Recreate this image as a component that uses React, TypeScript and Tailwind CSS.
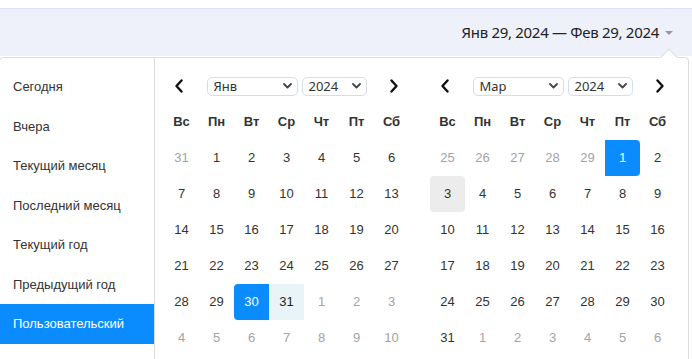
import React from 'react';

type Day = { d: number; muted?: boolean; kind?: 'start' | 'end' | 'mid' | 'hover' };

const weekDays = ['Вс', 'Пн', 'Вт', 'Ср', 'Чт', 'Пт', 'Сб'];

const presets = [
  'Сегодня',
  'Вчера',
  'Текущий месяц',
  'Последний месяц',
  'Текущий год',
  'Предыдущий год',
  'Пользовательский',
];

const range = (from: number, to: number, muted = false): Day[] =>
  Array.from({ length: to - from + 1 }, (_, i) => ({ d: from + i, muted }));

const january: Day[] = [
  { d: 31, muted: true },
  ...range(1, 29),
  { d: 30, kind: 'start' },
  { d: 31, kind: 'mid' },
  ...range(1, 10, true),
];

const march: Day[] = [
  ...range(25, 29, true),
  { d: 1, kind: 'end' },
  { d: 2 },
  { d: 3, kind: 'hover' },
  ...range(4, 31),
  ...range(1, 6, true),
];

const ChevronLeft = () => (
  <svg width="10" height="14" viewBox="0 0 10 14" fill="none">
    <path d="M7.5 1.5 2.5 7l5 5.5" stroke="#111" strokeWidth="2.4" strokeLinecap="round" strokeLinejoin="round" />
  </svg>
);

const ChevronRight = () => (
  <svg width="10" height="14" viewBox="0 0 10 14" fill="none">
    <path d="M2.5 1.5 7.5 7l-5 5.5" stroke="#111" strokeWidth="2.4" strokeLinecap="round" strokeLinejoin="round" />
  </svg>
);

const SelectChevron = () => (
  <svg width="9" height="6" viewBox="0 0 9 6" fill="none">
    <path d="M1 1l3.5 3.5L8 1" stroke="#444" strokeWidth="1.8" strokeLinecap="round" strokeLinejoin="round" />
  </svg>
);

const FakeSelect = ({ value, width }: { value: string; width: string }) => (
  <div
    className={`${width} h-[19px] flex items-center justify-between pl-[6px] pr-[5px] border border-[#d6dcea] rounded-[5px] bg-white text-[13px] text-[#333] font-['Noto_Sans',sans-serif] leading-none`}
  >
    <span>{value}</span>
    <SelectChevron />
  </div>
);

const cellClass = (day: Day) => {
  if (day.kind === 'start') return 'bg-[#0a8cff] text-white rounded-l-[4px]';
  if (day.kind === 'end') return 'bg-[#0a8cff] text-white rounded-r-[4px]';
  if (day.kind === 'mid') return 'bg-[#e8f4f8] text-[#222]';
  if (day.kind === 'hover') return 'bg-[#ececec] text-[#333] rounded-[4px]';
  return day.muted ? 'text-[#a3a3a3]' : 'text-[#333]';
};

const Month = ({ month, days }: { month: string; days: Day[] }) => (
  <div className="w-[245px]">
    <div className="h-[20px] flex items-center justify-between px-[10px]">
      <ChevronLeft />
      <div className="flex gap-[4px]">
        <FakeSelect value={month} width="w-[91px]" />
        <FakeSelect value="2024" width="w-[65px]" />
      </div>
      <ChevronRight />
    </div>
    <div className="grid grid-cols-7 mt-[8px]">
      {weekDays.map((w) => (
        <div key={w} className="h-[36px] flex items-center justify-center text-[13px] font-bold text-[#333]">
          {w}
        </div>
      ))}
      {days.map((day, i) => (
        <div key={i} className={`h-[36px] flex items-center justify-center text-[13px] ${cellClass(day)}`}>
          {day.d}
        </div>
      ))}
    </div>
  </div>
);

export default function App() {
  return (
    <div className="w-[692px] h-[359px] overflow-hidden bg-white font-['Liberation_Sans',Arial,sans-serif]">
      <div className="h-[8px]" />
      <div className="h-[48px] bg-[#eef1fa] border-t border-[#dfe2f4] flex items-center justify-end pr-[19px]">
        <span className="text-[15px] text-[#222] font-['Noto_Sans',sans-serif] tracking-[-0.3px]">
          Янв 29, 2024 — Фев 29, 2024
        </span>
        <span className="ml-[6px] w-0 h-0 border-l-[4px] border-r-[4px] border-t-[4px] border-l-transparent border-r-transparent border-t-[#999]" />
      </div>
      <div className="relative mt-[1px] -ml-[1px] w-[690px] h-[320px] border border-[#dcdcdc] rounded-t-[4px] bg-white flex">
        <div className="absolute -top-[7px] left-[663px] w-[12px] h-[12px] rotate-45 bg-white border-l border-t border-[#dcdcdc]" />
        <div className="w-[155px] shrink-0 border-r border-[#dcdcdc] pt-[9px]">
          {presets.map((p, i) => (
            <div
              key={p}
              className={`h-[39.5px] flex items-center pl-[13px] text-[13px] ${
                i === presets.length - 1 ? 'bg-[#0a8cff] text-white' : 'text-[#333]'
              }`}
            >
              {p}
            </div>
          ))}
        </div>
        <div className="flex gap-[21px] pl-[9px] pt-[18px]">
          <Month month="Янв" days={january} />
          <Month month="Мар" days={march} />
        </div>
      </div>
    </div>
  );
}
